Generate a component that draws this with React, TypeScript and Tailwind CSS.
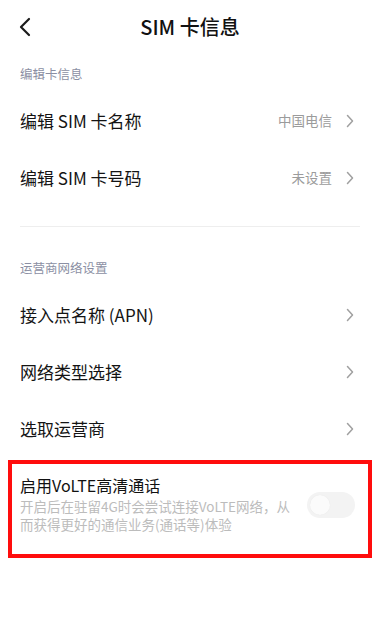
const font = { fontFamily: '"Noto Sans CJK SC", "Noto Sans", sans-serif' };

function Chevron() {
  return (
    <svg width="8" height="14" viewBox="0 0 8 14" fill="none" className="shrink-0">
      <path d="M1.5 1.5 L6.5 7 L1.5 12.5" stroke="#a0a0a0" strokeWidth="1.5" strokeLinecap="round" strokeLinejoin="round" />
    </svg>
  );
}

function Row({ label, value }: { label: string; value?: string }) {
  return (
    <div className="flex h-[57px] items-center pl-5 pr-[26px]">
      <span className="flex-1 text-[17px] text-[#141414]">{label}</span>
      {value && <span className="mr-[14px] text-[13.5px] text-[#9b9b9b]">{value}</span>}
      <Chevron />
    </div>
  );
}

function SectionLabel({ children }: { children: string }) {
  return (
    <div className="flex h-[40px] items-center px-5 text-[12.5px] text-[#8b8fa3]">{children}</div>
  );
}

export default function App() {
  return (
    <div className="min-h-[617px] w-[380px] bg-white" style={font}>
      <header className="relative flex h-[54px] items-center justify-center">
        <svg width="12" height="20" viewBox="0 0 12 20" fill="none" className="absolute left-[19px] top-[17px]">
          <path d="M10 2 L2 10 L10 18" stroke="#1a1a1a" strokeWidth="2.2" strokeLinecap="round" strokeLinejoin="round" />
        </svg>
        <h1 className="text-[20px] font-medium text-[#111]">SIM 卡信息</h1>
      </header>

      <div className="h-[39px]">
        <SectionLabel>编辑卡信息</SectionLabel>
      </div>
      <div className="-mt-px">
        <Row label="编辑 SIM 卡名称" value="中国电信" />
        <Row label="编辑 SIM 卡号码" value="未设置" />
      </div>

      <div className="mx-5 mt-[20px] h-px bg-[#eeeeee]" />

      <div className="mt-[21px]">
        <SectionLabel>运营商网络设置</SectionLabel>
      </div>
      <div className="-mt-[2px]">
        <Row label="接入点名称 (APN)" />
        <Row label="网络类型选择" />
        <Row label="选取运营商" />
      </div>

      <div className="mx-[8px] mt-[3px] flex items-center border-4 border-[#ff0d0d] pb-[21px] pl-[8px] pr-[13px] pt-[10px]">
        <div className="flex-1">
          <div className="text-[16px] leading-[23px] text-[#111]">启用VoLTE高清通话</div>
          <div className="text-[13.5px] leading-[18px] text-[#bcbcbc]">
            开启后在驻留4G时会尝试连接VoLTE网络，从
            <br />
            而获得更好的通信业务(通话等)体验
          </div>
        </div>
        <div className="mt-[2px] flex h-[26px] w-[48px] shrink-0 items-center rounded-full bg-[#f3f3f3] px-[3px]">
          <div className="h-[20px] w-[20px] rounded-full bg-[#fbfbfb] shadow-[0_0_1px_rgba(0,0,0,0.08)]" />
        </div>
      </div>
    </div>
  );
}
